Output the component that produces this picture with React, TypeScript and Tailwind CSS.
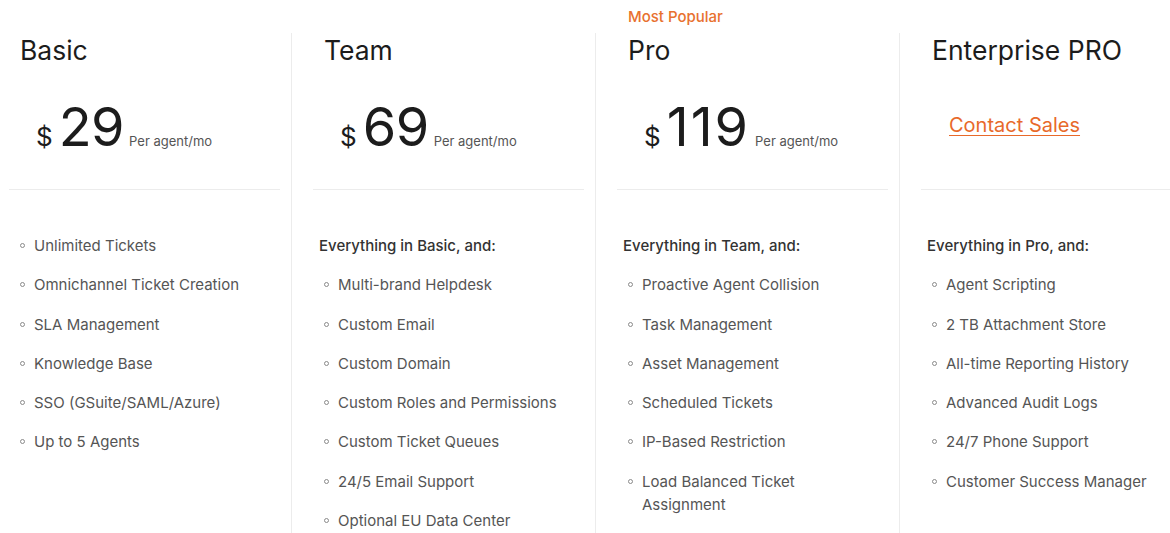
const plans = [
  {
    name: "Basic",
    price: "29",
    numClass: "tracking-[-0.5px]",
    intro: "",
    features: [
      "Unlimited Tickets",
      "Omnichannel Ticket Creation",
      "SLA Management",
      "Knowledge Base",
      "SSO (GSuite/SAML/Azure)",
      "Up to 5 Agents",
    ],
  },
  {
    name: "Team",
    price: "69",
    numClass: "tracking-[-0.5px]",
    intro: "Everything in Basic, and:",
    features: [
      "Multi-brand Helpdesk",
      "Custom Email",
      "Custom Domain",
      "Custom Roles and Permissions",
      "Custom Ticket Queues",
      "24/5 Email Support",
      "Optional EU Data Center",
    ],
  },
  {
    name: "Pro",
    price: "119",
    numClass: "tracking-[2px]",
    popular: true,
    intro: "Everything in Team, and:",
    features: [
      "Proactive Agent Collision",
      "Task Management",
      "Asset Management",
      "Scheduled Tickets",
      "IP-Based Restriction",
      "Load Balanced Ticket Assignment",
    ],
  },
  {
    name: "Enterprise PRO",
    price: "",
    numClass: "",
    intro: "Everything in Pro, and:",
    features: [
      "Agent Scripting",
      "2 TB Attachment Store",
      "All-time Reporting History",
      "Advanced Audit Logs",
      "24/7 Phone Support",
      "Customer Success Manager",
    ],
  },
];

export default function App() {
  return (
    <div className="w-[1170px] h-[533px] overflow-hidden bg-white font-['Inter','Liberation_Sans',sans-serif] antialiased">
      <div className="flex ml-[-13px]">
        {plans.map((plan) => (
          <div key={plan.name} className="w-[304px] flex-none flex flex-col">
            {/* label strip above the bordered card */}
            <div className="h-[33px] pl-[33px]">
              {plan.popular && (
                <p className="text-[15px] leading-[34px] font-medium text-[#e8712f]">Most Popular</p>
              )}
            </div>
            <div className="border-l border-[#ececec] h-[500px]">
              <h2 className="pl-[32px] pt-[1.5px] text-[26.5px] leading-[30px] text-[#1c1c1c]">{plan.name}</h2>

              {plan.price ? (
                <div className="mt-[35.5px] h-[54px] pl-[48px] flex items-baseline">
                  <span className="text-[26px] leading-none text-[#1c1c1c]">$</span>
                  <span className={`ml-[6px] text-[54px] leading-none text-[#1c1c1c] ${plan.numClass}`}>{plan.price}</span>
                  <span className="ml-[5px] text-[13px] leading-none text-[#555]">Per agent/mo</span>
                </div>
              ) : (
                <div className="mt-[35.5px] h-[54px] pl-[49px] pt-[11px]">
                  <a href="#" className="text-[20px] leading-[28px] text-[#e8692a] underline underline-offset-[3px] decoration-1">
                    Contact Sales
                  </a>
                </div>
              )}

              <div className="mt-[35px] ml-[21px] mr-[11px] h-px bg-[#ececec]" />

              <ul className="pt-[44px] pl-[27px] pr-[27px] flex flex-col gap-[16.3px] text-[15px] leading-[23px]">
                {plan.intro && <li className="font-medium text-[#333]">{plan.intro}</li>}
                {plan.features.map((f) => (
                  <li key={f} className="ml-[5px] flex items-start gap-[9px] text-[#555]">
                    <span className="mt-[9px] w-[5px] h-[5px] flex-none rounded-full border border-[#8a8a8a]" />
                    <span>{f}</span>
                  </li>
                ))}
              </ul>
            </div>
          </div>
        ))}
      </div>
    </div>
  );
}
